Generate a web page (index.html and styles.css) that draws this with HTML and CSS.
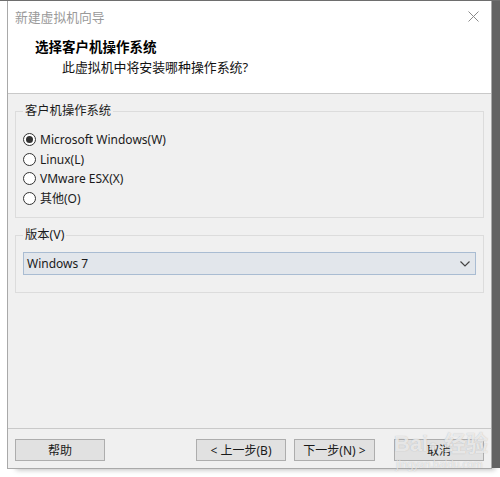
FILE: index.html
```html
<!DOCTYPE html>
<html lang="zh-CN">
<head>
<meta charset="utf-8">
<title>新建虚拟机向导</title>
<link rel="stylesheet" href="styles.css">
</head>
<body>
<div class="topline"></div>
<div class="screen">
  <div class="window">
    <div class="head">
      <div class="titlebar">
        <span class="title">新建虚拟机向导</span>
        <svg class="close" width="11" height="11" viewBox="0 0 11 11"><path d="M0.5 0.5 L10.5 10.5 M10.5 0.5 L0.5 10.5" stroke="#8a8a8a" stroke-width="1" fill="none"/></svg>
      </div>
      <div class="heading">选择客户机操作系统</div>
      <div class="subheading">此虚拟机中将安装哪种操作系统?</div>
    </div>
    <div class="body">
      <fieldset class="group group-os">
        <legend>客户机操作系统</legend>
        <label class="radio"><span class="dot checked"></span>Microsoft Windows(W)</label>
        <label class="radio"><span class="dot"></span>Linux(L)</label>
        <label class="radio"><span class="dot"></span>VMware ESX(X)</label>
        <label class="radio"><span class="dot"></span>其他(O)</label>
      </fieldset>
      <fieldset class="group group-ver">
        <legend>版本(V)</legend>
        <div class="select">
          <span>Windows 7</span>
          <svg width="10" height="6" viewBox="0 0 10 6"><path d="M0.5 0.5 L5 5 L9.5 0.5" stroke="#444" stroke-width="1.2" fill="none"/></svg>
        </div>
      </fieldset>
    </div>
    <div class="footer">
      <div class="btn">帮助</div>
      <div class="spacer"></div>
      <div class="btn">&lt; 上一步(B)</div>
      <div class="btn btn-next">下一步(N) &gt;</div>
      <div class="btn btn-cancel">取消</div>
      <div class="watermark">
        <div class="wm-top">Bai<span class="paw">●</span> 经验</div>
        <div class="wm-url">jingyan.baidu.com</div>
      </div>
    </div>
  </div>
  <div class="strip"></div>
</div>
</body>
</html>
```
FILE: styles.css
```css
* { box-sizing: border-box; }
html, body { margin: 0; padding: 0; }
body {
  width: 500px;
  height: 477px;
  background: #ffffff;
  font-family: "Noto Sans", "Noto Sans CJK SC", sans-serif;
  font-size: 12px;
  color: #1a1a1a;
  overflow: hidden;
}
.topline { height: 1px; background: #6e6e6e; }
.screen { display: flex; align-items: flex-start; }
.window {
  margin-left: 7px;
  width: 485px;
  height: 468px;
  border: 1px solid #a9a9a9;
  border-top: none;
  background: #f0f0f0;
  display: flex;
  flex-direction: column;
  box-shadow: 6px 4px 5px -3px rgba(0,0,0,0.25);
}
.strip { width: 8px; height: 467px; background: #636363; }
.head {
  background: #ffffff;
  height: 93px;
  border-bottom: 1px solid #c9c9c9;
}
.titlebar {
  height: 31px;
  display: flex;
  align-items: center;
  justify-content: space-between;
  padding: 0 12px 0 7px;
}
.title { color: #9a9a9a; font-size: 12.8px; }
.close { display: block; }
.heading {
  padding-left: 27px;
  margin-top: 6px;
  font-weight: bold;
  font-size: 13.5px;
  line-height: 18px;
  color: #000;
}
.subheading {
  padding-left: 54px;
  margin-top: 2px;
  font-size: 12.9px;
  line-height: 18px;
  color: #111;
}
.body {
  flex: 1;
  padding: 0 7px;
}
.group {
  margin: 9px 0 0 0;
  border: 1px solid #dcdcdc;
  padding: 0 7px;
  min-width: 0;
}
.group legend {
  margin-left: 0px;
  padding: 0 2px;
  font-size: 12.3px;
  line-height: 16px;
  color: #1a1a1a;
}
.group-os { padding-top: 11px; padding-bottom: 9px; }
.group-ver { padding-top: 9px; padding-bottom: 17px; }
.radio {
  display: flex;
  align-items: center;
  height: 19.5px;
  font-size: 12px;
  color: #1a1a1a;
}
.dot {
  width: 13px;
  height: 13px;
  border: 1px solid #333;
  border-radius: 50%;
  background: #fff;
  margin-right: 4px;
  display: flex;
  align-items: center;
  justify-content: center;
}
.dot.checked::after {
  content: "";
  width: 7px;
  height: 7px;
  border-radius: 50%;
  background: #333;
}
.select {
  height: 23px;
  border: 1px solid #a9bcd2;
  background: #e2e6eb;
  display: flex;
  align-items: center;
  justify-content: space-between;
  padding: 0 5px 0 3px;
  font-size: 12px;
}
.footer {
  height: 40px;
  border-top: 1px solid #c9c9c9;
  padding: 10px 7px 7px 7px;
  display: flex;
  align-items: flex-start;
  position: relative;
}
.spacer { flex: 1; }
.btn {
  width: 90px;
  height: 22px;
  border: 1px solid #adadad;
  background: #e1e1e1;
  display: flex;
  align-items: center;
  justify-content: center;
  font-size: 12px;
  color: #1a1a1a;
}
.btn-next { width: 81px; margin-left: 8px; }
.btn-cancel { margin-left: 19px; }
.watermark {
  position: absolute;
  left: 386px;
  top: 3px;
  color: rgba(255,255,255,0.7);
  text-shadow: 0 0 1px rgba(140,140,140,0.6);
  pointer-events: none;
}
.wm-top { font-size: 22px; font-weight: bold; line-height: 24px; font-family: "Liberation Sans", "Noto Sans CJK SC", sans-serif; }
.wm-top .paw { font-size: 16px; }
.wm-url { font-size: 10px; line-height: 12px; margin-left: 2px; }
```
